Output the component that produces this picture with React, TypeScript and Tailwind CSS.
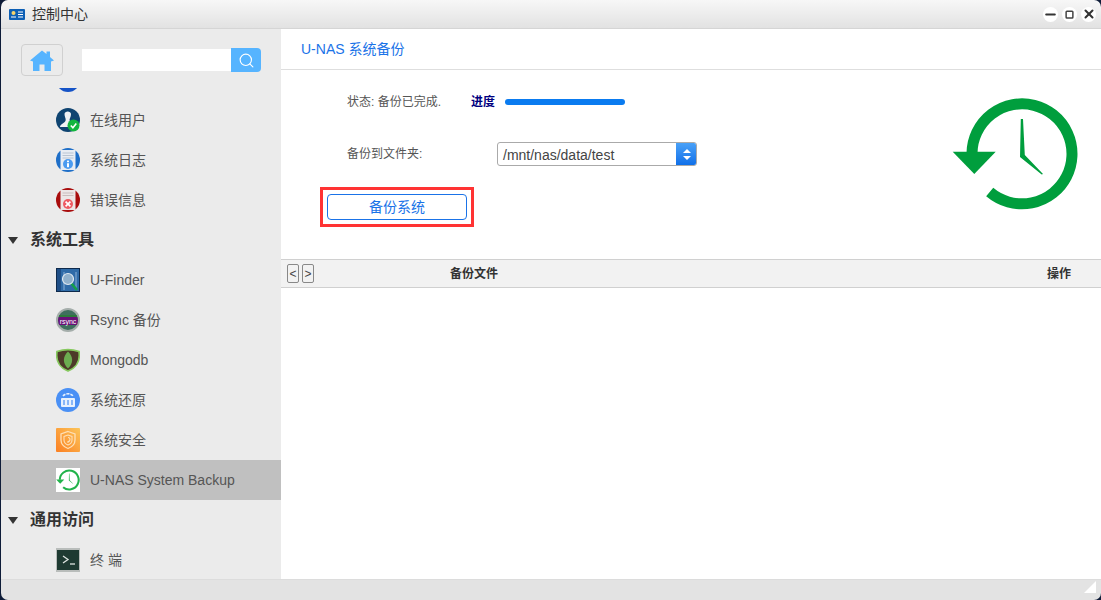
import { Minus, Search, Square, X } from 'lucide-react'

const fontStack = '[font-family:"Liberation_Sans","Noto_Sans_CJK_SC",sans-serif]'

function ClockIcon({ color, className }: { color: string; className: string }) {
  return (
    <svg viewBox="0 0 127 112" className={className}>
      <path d="M20 55 A50 50 0 1 1 37.7 94" fill="none" stroke={color} strokeWidth="11" />
      <path d="M0.7 53.7 L43.7 53.7 L22.3 76 Z" fill={color} />
      <path d="M68.8 21 L71 21 L72.8 57 L91 76 L89.7 76.5 L68 59 Z" fill={color} />
    </svg>
  )
}

function OnlineIcon() {
  return (
    <svg viewBox="0 0 24 24" className="h-6 w-6">
      <circle cx="12" cy="12" r="12" fill="#0f4471" />
      <path d="M8.5 6 C8.5 2.5 15 2.5 15 6 C15 9 13.5 10 13.5 12 C13.5 14 18 14 18 16 L18 19 L4 19 C4 16 9.5 15 9.7 12 C9.8 10 8.5 8.5 8.5 6 Z" fill="#f0f2f4" />
      <circle cx="17.5" cy="17.5" r="6" fill="#12b53f" />
      <path d="M14.8 17.5 L16.9 19.7 L20.3 15.6" fill="none" stroke="#fff" strokeWidth="1.6" />
    </svg>
  )
}

function LogIcon() {
  return (
    <svg viewBox="0 0 24 24" className="h-6 w-6">
      <circle cx="12" cy="12" r="12" fill="#1f6fc8" />
      <rect x="4.5" y="2" width="15" height="20" fill="#e9edf3" />
      <path d="M6.5 5 H17.5 M6.5 7.5 H17.5 M6.5 10 H17.5" stroke="#b9c4d2" strokeWidth="1" />
      <circle cx="12" cy="16" r="5" fill="#4b9bf0" />
      <rect x="11" y="15.2" width="2" height="4" fill="#fff" />
      <rect x="11" y="12.6" width="2" height="1.6" fill="#fff" />
    </svg>
  )
}

function ErrorIcon() {
  return (
    <svg viewBox="0 0 24 24" className="h-6 w-6">
      <circle cx="12" cy="12" r="12" fill="#a80c0c" />
      <rect x="4.5" y="2" width="15" height="20" fill="#ece6e6" />
      <path d="M6.5 5 H17.5 M6.5 7.5 H17.5" stroke="#c9bcbc" strokeWidth="1" />
      <circle cx="12" cy="16" r="5" fill="#ee5a62" />
      <path d="M9.6 13.6 L14.4 18.4 M14.4 13.6 L9.6 18.4" stroke="#fff" strokeWidth="1.7" />
    </svg>
  )
}

function FinderIcon() {
  return (
    <svg viewBox="0 0 24 24" className="h-6 w-6">
      <rect width="24" height="24" fill="#0e2a4c" />
      <rect x="1" y="1" width="22" height="22" fill="#2f6ba8" />
      <rect x="1" y="1" width="4" height="22" fill="#1e4e86" />
      <path d="M8 4 V22 M20 4 V22" stroke="#8eb3d8" strokeWidth="1" />
      <path d="M15 15 L21 22" stroke="#15a04a" strokeWidth="2.6" />
      <circle cx="12" cy="11" r="5.5" fill="#8fb0cc" stroke="#dfe8f0" strokeWidth="1.2" />
    </svg>
  )
}

function RsyncIcon() {
  return (
    <div className="relative flex h-6 w-6 flex-col items-center justify-center overflow-hidden rounded-full border-2 border-[#a5aeab] bg-[#3f6f5e]">
      <div className="h-[2px] w-[18px] bg-[#2c7a3c]" />
      <div className="flex h-[8px] w-[22px] flex-none items-center justify-center bg-[#6a1078] text-[7px] leading-none text-white">rsync</div>
    </div>
  )
}

function MongoIcon() {
  return (
    <svg viewBox="0 0 24 24" className="h-6 w-6">
      <path d="M1 3.5 C8 1 16 1 23 3.5 C24.5 13 20 20 12 23 C4 20 -0.5 13 1 3.5 Z" fill="#4d3a28" stroke="#86c95e" strokeWidth="1.7" />
      <path d="M12 3.5 C17.5 9 17.5 15 12 20.5 C6.5 15 6.5 9 12 3.5 Z" fill="#6cad50" />
    </svg>
  )
}

function RestoreIcon() {
  return (
    <svg viewBox="0 0 24 24" className="h-6 w-6">
      <circle cx="12" cy="12" r="12" fill="#4a90f5" />
      <rect x="5" y="10" width="14" height="9" rx="1" fill="#e8f1fd" />
      <path d="M8 12 V17 M12 12 V17 M16 12 V17" stroke="#4a90f5" strokeWidth="1.2" />
      <path d="M7 8 A6 5 0 0 1 17 8" fill="none" stroke="#e8f1fd" strokeWidth="1.6" strokeDasharray="3 1" />
    </svg>
  )
}

function SecurityIcon() {
  return (
    <svg viewBox="0 0 24 24" className="h-6 w-6">
      <defs>
        <linearGradient id="sec" x1="1" y1="0" x2="0" y2="1">
          <stop offset="0" stopColor="#fcc55a" />
          <stop offset="1" stopColor="#fb7f22" />
        </linearGradient>
      </defs>
      <rect width="24" height="24" rx="1" fill="url(#sec)" />
      <path d="M12 3.5 L19 6 V12 C19 16 16 19 12 20.5 C8 19 5 16 5 12 V6 Z" fill="none" stroke="#fde0b8" strokeWidth="1.3" />
      <path d="M12 7 L16 8.5 V12 C16 14.5 14.5 16 12 17 C9.5 16 8 14.5 8 12 V8.5 Z" fill="none" stroke="#fde0b8" strokeWidth="1.1" />
      <path d="M12 9.5 A2 2 0 0 1 12 13.5 V15" fill="none" stroke="#fde0b8" strokeWidth="1.1" />
    </svg>
  )
}

function BackupIcon() {
  return (
    <div className="flex h-6 w-6 items-center justify-center bg-white">
      <ClockIcon color="#22b34b" className="h-[22px] w-6" />
    </div>
  )
}

function TerminalIcon() {
  return (
    <div className="flex h-6 w-6 items-center justify-center bg-[#b9bdbb]">
      <svg viewBox="0 0 22 20" className="h-5 w-[22px]">
        <rect width="22" height="20" fill="#1e3a32" />
        <path d="M6 6 L11 9.5 L6 13" fill="none" stroke="#dfe5e2" strokeWidth="1.3" />
        <path d="M13 14 H18" stroke="#dfe5e2" strokeWidth="1.3" />
      </svg>
    </div>
  )
}

function TreeHeader({ label }: { label: string }) {
  return (
    <div className="flex h-10 items-center pl-[7px]">
      <div className="h-0 w-0 border-x-[5px] border-t-[7px] border-x-transparent border-t-[#333]" />
      <span className="ml-3 text-base font-semibold text-[#333]">{label}</span>
    </div>
  )
}

function TreeItem({ icon, label, active }: { icon: React.ReactNode; label: string; active?: boolean }) {
  return (
    <div className={`flex h-10 items-center pl-[55px] ${active ? 'bg-[#c0c0c0]' : ''}`}>
      <div className="h-6 w-6 flex-none">{icon}</div>
      <span className="ml-[10px] text-sm text-[#555]">{label}</span>
    </div>
  )
}

export default function App() {
  return (
    <div className={`h-[600px] w-[1101px] overflow-hidden bg-[#0e1c38] pl-px ${fontStack}`}>
      <div className="flex h-full flex-col overflow-hidden rounded-[7px]">
        {/* title bar */}
        <div className="flex h-[29px] flex-none items-center border-b border-[#d5d5d5] bg-gradient-to-b from-[#f7f7f7] to-[#e2e2e2] pl-2 pr-[5px]">
          <svg viewBox="0 0 16 11" className="h-[11px] w-4">
            <rect width="16" height="11" rx="1" fill="#0d5fb5" />
            <circle cx="4.5" cy="4" r="2" fill="#f7d36a" />
            <path d="M2 8 H7 M9 3 H14 M9 5.5 H14 M9 8 H14" stroke="#fff" strokeWidth="1" />
          </svg>
          <span className="ml-[7px] text-sm text-[#333]">控制中心</span>
          <div className="ml-auto flex gap-1">
            <div className="flex h-[15px] w-[15px] items-center justify-center rounded-full bg-white">
              <Minus size={15} strokeWidth={3} color="#333" />
            </div>
            <div className="flex h-[15px] w-[15px] items-center justify-center rounded-full bg-white">
              <Square size={9} strokeWidth={4} color="#444" />
            </div>
            <div className="flex h-[15px] w-[15px] items-center justify-center rounded-full bg-white">
              <X size={14} strokeWidth={3.5} color="#333" />
            </div>
          </div>
        </div>

        <div className="flex min-h-0 flex-1">
          {/* sidebar */}
          <div className="flex w-[280px] flex-none flex-col bg-[#ebebeb]">
            <div className="flex h-[59px] flex-none items-start pl-5 pt-[15px]">
              <div className="flex h-8 w-[42px] items-center justify-center rounded-[4px] border border-[#d0d0d0]">
                <svg viewBox="0 0 24 21" className="h-[21px] w-6">
                  <path d="M12 0.5 L16.5 4 V1.5 H20 V7 L24 10.5 L21 11.5 V21 H14.5 V14.5 H9.5 V21 H3 V11.5 L0 10.5 Z" fill="#56b4ff" />
                </svg>
              </div>
              <div className="ml-[19px] mt-[5px] h-[22px] w-[149px] bg-white" />
              <div className="mt-1 flex h-6 w-[30px] items-center justify-center rounded-r-[4px] bg-[#56b4ff]">
                <Search size={17} strokeWidth={1.6} color="#fff" />
              </div>
            </div>
            <div className="min-h-0 flex-1 overflow-hidden">
              <div className="-mt-[28px]">
                <TreeItem icon={<div className="h-6 w-6 rounded-full bg-[#1553c7]" />} label="" />
                <TreeItem icon={<OnlineIcon />} label="在线用户" />
                <TreeItem icon={<LogIcon />} label="系统日志" />
                <TreeItem icon={<ErrorIcon />} label="错误信息" />
                <TreeHeader label="系统工具" />
                <TreeItem icon={<FinderIcon />} label="U-Finder" />
                <TreeItem icon={<RsyncIcon />} label="Rsync 备份" />
                <TreeItem icon={<MongoIcon />} label="Mongodb" />
                <TreeItem icon={<RestoreIcon />} label="系统还原" />
                <TreeItem icon={<SecurityIcon />} label="系统安全" />
                <TreeItem icon={<BackupIcon />} label="U-NAS System Backup" active />
                <TreeHeader label="通用访问" />
                <TreeItem icon={<TerminalIcon />} label="终 端" />
              </div>
            </div>
          </div>

          {/* main panel */}
          <div className="flex min-w-0 flex-1 flex-col bg-white">
            <div className="flex h-[41px] flex-none items-center border-b border-[#dedede] pl-5 text-sm text-[#1a73e8]">
              U-NAS 系统备份
            </div>
            <div className="flex h-[189px] flex-none justify-between">
              <div>
                <div className="ml-[66px] mt-[24px] flex h-4 items-center text-xs text-[#555]">
                  <span className="w-[124px]">状态: 备份已完成.</span>
                  <span className="w-[34px] font-semibold text-[#000080]">进度</span>
                  <div className="h-[6px] w-[120px] rounded-full bg-[#0a7bf0]" />
                </div>
                <div className="ml-[66px] mt-8 flex h-6 items-center text-xs text-[#555]">
                  <span className="w-[150px]">备份到文件夹:</span>
                  <div className="flex h-6 w-[200px] overflow-hidden rounded-[3px] border border-[#aaa]">
                    <span className="flex-1 pl-[5px] text-sm leading-[25px] text-[#444]">/mnt/nas/data/test</span>
                    <div className="-my-px -mr-px flex h-6 w-[21px] flex-col items-center justify-center gap-[3px] bg-gradient-to-b from-[#4ba3f8] to-[#0a6de8]">
                      <div className="h-0 w-0 border-x-[4px] border-b-[4px] border-x-transparent border-b-white" />
                      <div className="h-0 w-0 border-x-[4px] border-t-[4px] border-x-transparent border-t-white" />
                    </div>
                  </div>
                </div>
                <div className="ml-[39px] mt-[21px] h-10 w-[154px] border-[3px] border-[#f33] p-1">
                  <button className="h-[26px] w-[140px] rounded-[4px] border border-[#1a73e8] bg-white text-sm text-[#1a73e8]">
                    备份系统
                  </button>
                </div>
              </div>
              <ClockIcon color="#009e3d" className="mr-[22px] mt-[28px] h-[112px] w-[127px]" />
            </div>

            {/* table header */}
            <div className="flex h-[29px] flex-none items-center border-y border-[#d0d0d0] bg-[#f2f2f2] pl-[6px] text-xs font-semibold text-[#333]">
              <div className="flex gap-[3px]">
                <div className="flex h-[19px] w-3 items-center justify-center rounded-[2px] border border-[#888] text-xs font-normal leading-none text-[#444]">&lt;</div>
                <div className="flex h-[19px] w-3 items-center justify-center rounded-[2px] border border-[#888] text-xs font-normal leading-none text-[#444]">&gt;</div>
              </div>
              <span className="ml-[136px] pt-px">备份文件</span>
              <span className="ml-auto mr-[30px] pt-px">操作</span>
            </div>
            <div className="flex-1" />
          </div>
        </div>

        {/* status bar */}
        <div className="relative h-[21px] flex-none border-t border-[#dcdcdc] bg-[#e3e3e3]">
          <svg viewBox="0 0 12 12" className="absolute right-[5px] top-[1px] h-3 w-3">
            <path d="M12 0 V12 H0 Z" fill="#fff" />
          </svg>
        </div>
      </div>
    </div>
  )
}
